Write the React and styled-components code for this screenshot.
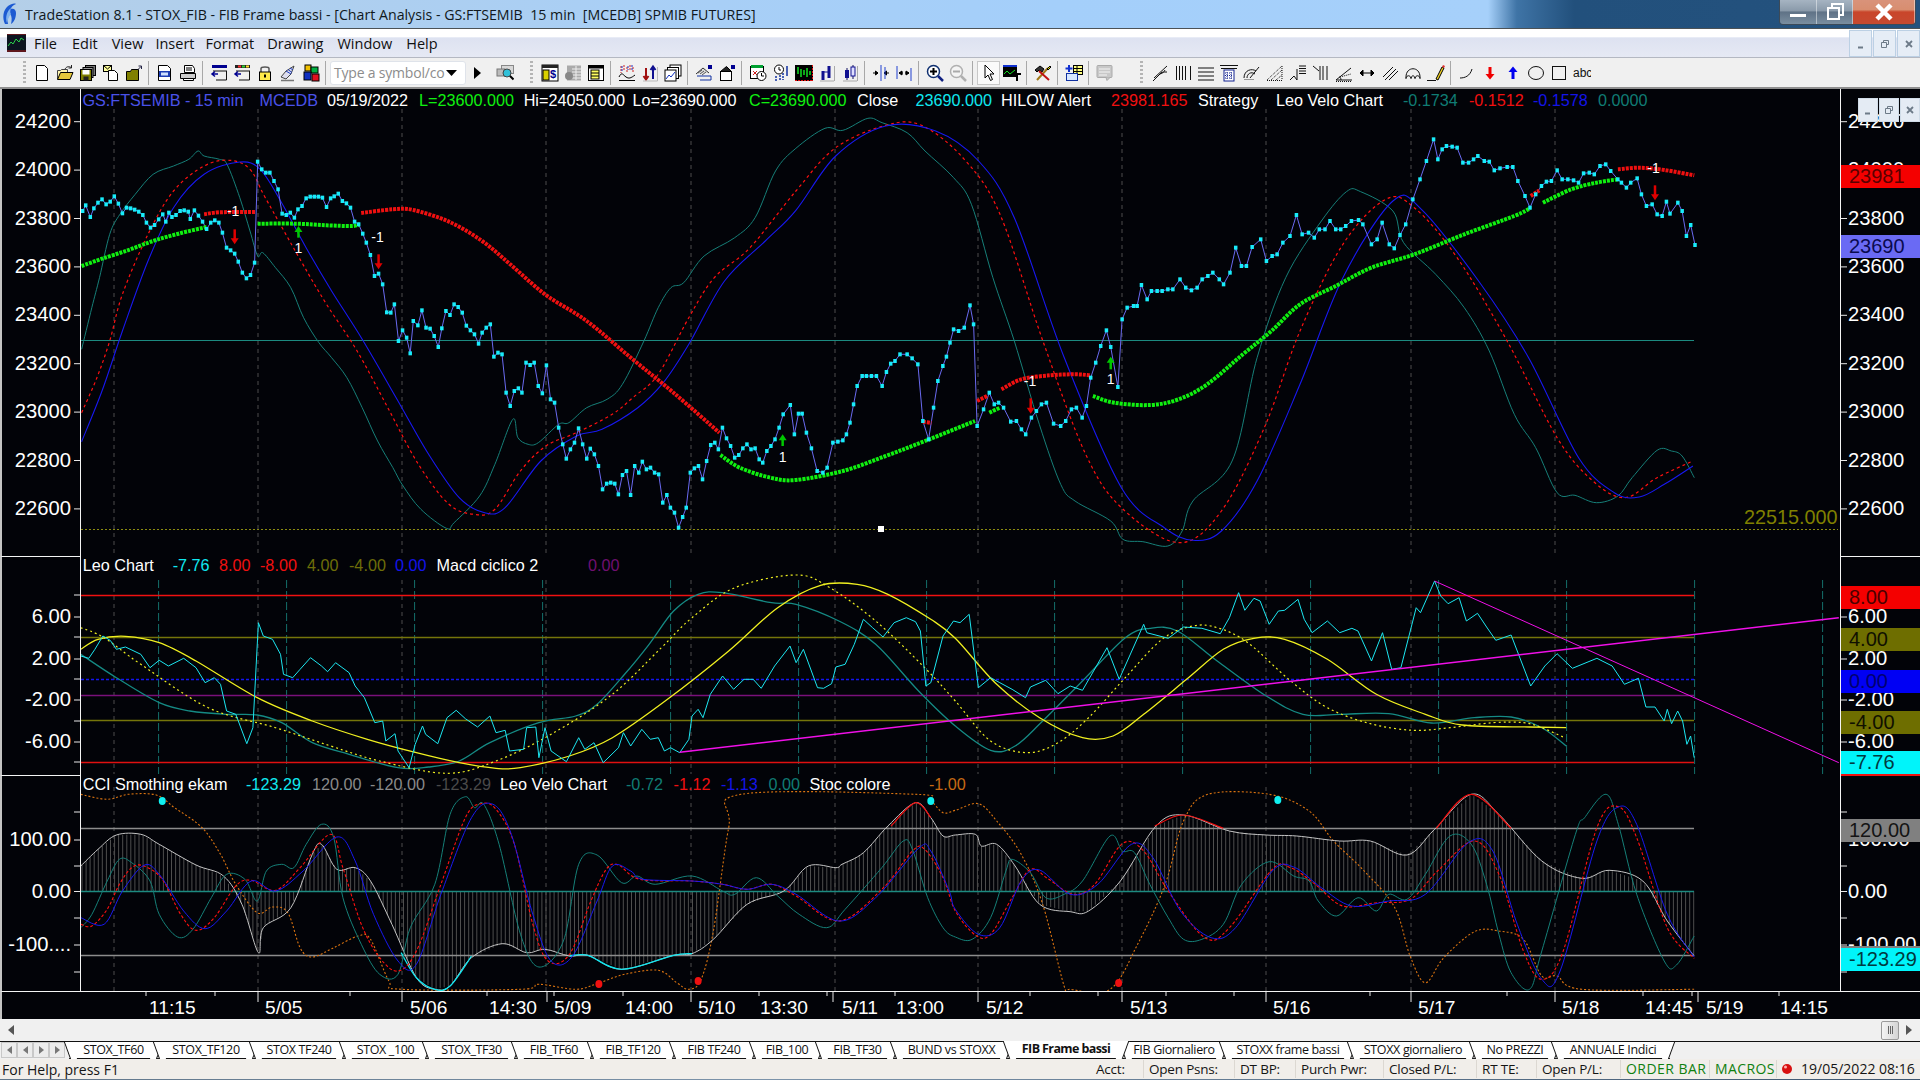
import React from 'react';
import styled, { createGlobalStyle } from 'styled-components';

const GlobalStyle = createGlobalStyle`
  html, body {
    margin: 0;
    padding: 0;
    width: 1920px;
    height: 1080px;
    overflow: hidden;
    background: #f0f0f0;
  }
  * { box-sizing: border-box; }
`;

const UI_FONT = '"Open Sans", "Liberation Sans", sans-serif';
const CHART_FONT = '"Liberation Sans", Arial, sans-serif';

/* ---------- traced chart data, written in crop coordinates ---------- */

const parse = (str, sx, ox, oy) =>
  str.trim().split(/\s+/).map((s) => {
    const [x, y] = s.split(',').map(Number);
    return [ox + x / sx, oy + y / 3];
  });
const A = (s) => parse(s, 1.96, 0, 90);
const B = (s) => parse(s, 1.4, 800, 90);
const C = (s) => parse(s, 1.633, 0, 550);
const D = (s) => parse(s, 1.633, 960, 550);

const mono = (pts) => pts.filter((p, i) => i === 0 || p[0] > pts[i - 1][0] + 0.5);
const poly = (pts) => pts.map((p) => `${p[0].toFixed(1)},${p[1].toFixed(1)}`).join(' ');
const smooth = (pts) =>
  pts.reduce((d, p, i) => {
    if (i === 0) return `M${p[0].toFixed(1)} ${p[1].toFixed(1)}`;
    const p0 = pts[i - 2] || pts[i - 1];
    const p1 = pts[i - 1];
    const p3 = pts[i + 1] || p;
    const c1 = [p1[0] + (p[0] - p0[0]) / 6, p1[1] + (p[1] - p0[1]) / 6];
    const c2 = [p[0] - (p3[0] - p1[0]) / 6, p[1] - (p3[1] - p1[1]) / 6];
    return `${d}C${c1[0].toFixed(1)} ${c1[1].toFixed(1)} ${c2[0].toFixed(1)} ${c2[1].toFixed(1)} ${p[0].toFixed(1)} ${p[1].toFixed(1)}`;
  }, '');

const yAt = (pts, x) => {
  for (let i = 1; i < pts.length; i++) {
    if (x <= pts[i][0]) {
      const t = (x - pts[i - 1][0]) / (pts[i][0] - pts[i - 1][0]);
      return pts[i - 1][1] + t * (pts[i][1] - pts[i - 1][1]);
    }
  }
  return pts[pts.length - 1][1];
};

const price = [
  ...A(`162,360 168,343 177,378 184,352 192,335 200,325 208,340 216,332 224,316 232,338 240,367 248,350 256,352 264,356 272,362 280,372 287,395 295,410 303,402 311,385 319,370 325,392 331,365 337,378 345,372 353,360 361,358 369,362 373,384 381,358 389,374 397,392 405,414 413,395 421,388 429,395 436,425 444,470 452,478 460,488 467,512 475,545 483,562 491,552 499,515 505,212 513,235 521,245 529,245 537,270 545,295 553,368 561,372 569,365 577,380 584,355 592,345 600,322 608,317 616,317 624,317 632,320 640,348 648,322 655,316 663,308 671,330 679,337 687,350 695,392 703,400 711,428 718,455 726,492 734,555 742,548 750,580 758,664 766,665 773,640 781,750 789,718 797,740 804,787 810,690 819,703 827,658 835,710 843,713 851,735 859,768 866,712 874,660 882,672 890,640 898,648 906,665 914,704 922,718 930,730 938,758 945,725 953,710 961,700 968,797 976,785 984,790 992,905 1000,945 1008,900 1016,892 1023,905 1031,815 1039,822 1047,815 1055,885 1063,907 1071,823 1079,925 1087,935 1095,1010 1103,1060 1110,1103 1118,1075 1126,1055 1134,1012 1142,1060 1150,1103 1157,1073 1165,1090 1173,1125 1181,1195 1189,1178 1197,1175 1205,1178 1212,1210 1220,1152 1228,1140 1236,1212 1244,1125 1252,1145 1259,1112 1267,1135 1275,1130 1283,1145 1291,1150 1299,1235 1307,1212 1314,1250 1322,1265 1330,1310 1338,1278 1345,1250 1353,1145 1361,1132 1369,1125 1377,1165 1385,1110 1393,1062 1401,1055 1408,1075 1416,1010 1424,1042 1432,1065 1440,1100 1448,1092 1456,1072 1464,1060 1472,1075 1480,1072 1488,1105 1495,1115 1503,1080 1511,1065 1519,1045 1527,1010 1535,970 1549,942 1557,1030 1565,968`),
  ...B(`3,968 9,1025 16,1072 24,1140 32,1145 38,1130 46,1055 53,1052 60,1048 65,1030 70,995 75,940 80,885 87,855 93,855 100,855 107,855 115,885 121,843 127,818 133,810 140,790 150,790 157,802 165,820 172,990 180,1045 187,950 193,870 200,825 205,797 210,755 215,715 222,720 230,710 238,643 243,700 248,1005 257,955 265,905 272,940 278,935 285,950 295,992 303,990 310,1015 316,1030 324,980 331,960 338,940 345,935 355,998 365,1005 372,990 380,955 387,950 395,980 401,945 407,860 414,815 421,765 429,718 435,768 445,888 451,685 458,650 467,645 472,645 478,582 486,625 492,600 500,600 507,600 515,595 522,595 532,565 540,590 548,598 556,590 563,565 571,555 578,545 587,565 593,580 602,545 610,470 618,525 625,525 633,468 645,445 653,510 661,495 668,490 676,455 686,435 695,372 703,430 712,425 720,440 727,415 735,415 742,390 750,415 757,415 764,405 772,390 782,387 788,400 800,460 808,445 815,395 825,460 832,472 840,432 848,400 858,325 868,265 877,210 887,145 893,205 899,175 905,165 913,167 920,170 928,215 936,215 943,205 949,195 958,210 965,212 972,238 980,232 990,228 998,228 1005,270 1015,315 1022,350 1030,310 1038,285 1045,272 1052,270 1060,238 1067,265 1075,265 1083,268 1090,275 1097,247 1105,245 1112,250 1120,225 1128,220 1135,240 1145,265 1150,275 1157,290 1163,275 1172,262 1178,310 1185,345 1193,340 1200,370 1207,375 1213,332 1218,368 1229,335 1235,360 1241,435 1247,402 1253,462`),
];

const fastTeal = [
  ...A(`160,775 180,650 195,560 215,430 235,370 265,310 300,250 340,225 370,205 388,180 400,195 430,205 445,220 470,320 490,420 505,495 515,485 540,530 570,590 595,680 625,755 650,800 680,860 710,950 740,1050 770,1130 790,1185 825,1255 875,1312 890,1295 940,1215 970,1120 1005,985 1015,1040 1035,1060 1055,1055 1095,1000 1115,995 1150,950 1190,925 1220,880 1262,750 1290,650 1315,590 1340,575 1380,495 1440,440 1480,380 1520,240 1560,172`),
  ...B(`35,112 60,118 95,82 115,95 150,125 175,180 215,260 240,340 270,560 300,750 335,1000 365,1180 385,1230 435,1290 452,1345 480,1352 515,1365 535,1320 550,1230 605,1110 640,800 680,560 730,390 765,302 785,302 830,360 845,455 890,550 930,650 965,780 1000,970 1030,1070 1060,1205 1085,1213 1115,1235 1145,1215 1165,1160 1200,1078 1220,1080 1235,1095 1252,1160`),
];
const midRed = [
  ...A(`160,965 190,860 215,750 240,610 290,430 340,300 400,225 450,208 490,235 520,320 590,510 640,640 700,780 760,950 820,1120 880,1240 930,1270 970,1255 1020,1140 1070,1065 1130,1025 1200,970 1240,920 1290,850 1350,680 1400,560 1470,470 1560,300`),
  ...B(`50,170 120,103 170,103 230,205 280,370 340,750 400,1090 450,1250 530,1355 590,1260 650,1010 700,720 760,460 820,325 860,350 920,500 990,750 1060,1040 1110,1170 1155,1220 1200,1160 1250,1110`),
];
const slowBlue = [
  ...A(`160,1052 200,900 240,720 290,510 340,350 400,250 470,213 510,235 550,330 600,470 650,600 710,745 780,930 840,1090 900,1220 950,1265 990,1250 1060,1110 1130,1035 1180,1015 1250,950 1300,875 1350,760 1420,570 1500,450 1560,358`),
  ...B(`50,195 120,105 190,120 250,210 300,380 370,800 450,1190 510,1310 550,1348 590,1320 640,1170 700,880 760,560 830,330 870,355 950,570 1020,800 1090,1100 1140,1205 1175,1218 1210,1180 1250,1125`),
];
const greenRuns = [
  A('160,525 200,503 250,478 300,450 350,428 405,408'),
  A('505,398 580,398 640,403 690,405 705,400'),
  [...A('1412,1092 1450,1130 1510,1160 1560,1167'), ...B('60,1140 120,1095 175,1050 245,990')],
  B('265,965 280,950'),
  B('410,915 440,935 490,942 530,925 570,880 620,790 660,720 700,640 750,585 800,530 860,490 930,430 1000,375 1022,352'),
  B('1040,335 1080,295 1115,275 1145,265'),
];
const redRuns = [
  A('400,370 430,364 500,363'),
  A('708,366 770,355 810,357 880,392 945,450 1000,520 1070,612 1150,690 1240,805 1320,905 1410,1025'),
  B('172,992 184,996'),
  B('248,930 262,915'),
  B('282,895 310,865 350,853 385,850 407,853'),
  B('1023,315 1035,298'),
  B('1145,235 1175,230 1210,237 1252,253'),
];
const arrows = [
  { at: A('460,415 460,460'), color: '#e00000' },
  { at: A('585,440 585,405'), color: '#00c800' },
  { at: A('742,490 742,535'), color: '#e00000' },
  { at: A('1534,1065 1534,1030'), color: '#00c800' },
  { at: B('323,922 323,968'), color: '#e00000' },
  { at: B('435,835 435,797'), color: '#00c800' },
  { at: B('1197,283 1197,328'), color: '#e00000' },
];
const signalLabels = [
  [A('457,375')[0], '-1'],
  [A('740,453')[0], '-1'],
  [A('585,487')[0], '1'],
  [A('1534,1112')[0], '1'],
  [B('322,885')[0], '-1'],
  [B('1195,245')[0], '-1'],
  [B('435,880')[0], '1'],
];

const macdCyan = [
  ...C(`132,315 145,322 155,295 168,255 180,268 190,295 205,288 230,310 245,350 260,328 275,345 300,322 320,350 335,395 350,380 360,400 370,480 385,490 403,578 413,530 422,215 430,255 445,265 458,310 463,370 478,380 490,355 507,320 525,345 535,362 548,335 570,365 580,405 595,440 612,515 625,510 630,570 645,548 650,600 668,650 678,580 690,525 695,550 715,578 730,500 745,478 760,503 780,528 800,495 810,545 825,538 832,600 855,595 860,530 875,528 880,620 890,530 900,600 925,632 945,560 955,595 970,575 985,635 1010,590 1018,545 1030,585 1048,535 1062,565 1075,560 1085,600 1095,590 1110,605 1125,565 1130,495 1140,475 1148,500 1160,430 1180,375 1198,415 1215,385 1230,385 1243,412 1265,345 1290,285 1300,335 1312,295 1335,410 1345,412 1358,398 1365,348 1380,340 1395,280 1410,205 1425,230 1442,258 1460,215 1480,200 1495,212 1503,240 1512,405 1520,395 1540,255 1557,210`),
  ...D(`0,215 15,190 30,410 50,380 65,395 85,415 107,440 115,408 140,388 160,428 180,405 200,418 240,290 260,385 300,220 305,245 340,262 365,228 395,232 425,248 440,200 455,125 465,178 480,142 490,150 505,220 520,180 530,178 552,145 562,205 575,245 600,210 620,245 640,232 650,240 672,330 690,245 705,355 720,350 745,170 752,185 775,90 785,135 797,158 815,140 827,210 845,187 860,228 875,268 900,252 932,405 955,345 975,308 1000,352 1040,322 1065,345 1085,400 1108,382 1120,468 1135,468 1150,510 1155,475 1162,518 1172,480 1180,510 1187,580 1193,555 1199,620`),
];
const macdTeal = [
  ...C('132,310 190,380 260,455 310,480 370,490 420,492 460,515 510,575 570,610 650,650 700,648 750,630 800,575 880,515 940,495 975,460 1020,370 1060,280 1100,180 1140,130 1180,125 1260,155 1300,160 1370,210 1430,280 1500,420 1560,525'),
  ...D('50,598 90,585 135,510 200,390 270,260 310,232 355,240 420,330 500,435 560,490 620,490 700,488 770,516 840,500 900,498 950,530 990,585'),
];
const macdYellow = [
  ...C('132,295 160,265 205,256 260,275 320,330 420,440 510,510 600,565 680,605 750,635 810,652 850,650 930,615 1000,560 1090,445 1190,300 1270,170 1340,103 1400,100 1450,130 1520,205 1560,262'),
  ...D('60,400 130,500 200,560 250,555 300,490 370,385 430,295 480,262 530,265 600,325 680,430 760,490 820,522 930,528 990,530'),
];
const macdDotted = [
  ...C('132,230 170,260 230,340 340,470 450,530 540,585 620,630 730,667 810,630 900,550 1000,430 1080,290 1130,200 1200,110 1300,72 1355,110 1430,210 1510,350 1560,450'),
  ...D('50,570 110,605 160,575 210,500 270,380 330,265 380,225 420,230 470,275 540,390 600,470 670,518 740,538 800,530 870,515 920,515 950,530 985,558'),
];
const rising = [C('1110,604')[0], D('1435,200')[0]];
const falling = [D('775,90')[0], D('1435,635')[0]];

const cciLine = mono([
  ...C('132,945 160,895 190,852 230,850 260,880 320,942 365,975 395,1060 422,1205 430,1130 475,1070 510,910 525,880 550,955 580,950 605,990 640,1120 680,1280 710,1315 735,1305 770,1220 820,1178 860,1205 890,1195 930,1215 960,1213 1015,1255 1100,1213 1130,1208 1165,1165 1220,1060 1280,1020 1320,945 1365,950 1375,940 1410,905 1450,825 1495,755 1520,800 1540,855 1560,852'),
  ...D('25,850 35,885 60,880 90,945 130,1060 180,1082 210,1080 262,990 320,825 365,792 440,840 500,852 550,855 620,870 670,870 730,912 775,835 835,730 880,790 950,930 1015,982 1060,958 1115,990 1155,1110 1199,1215'),
]);
const cciCyan = [
  C('655,1205 680,1280 710,1315 735,1305 770,1215'),
  C('930,1215 960,1213 1015,1255 1100,1213 1130,1208'),
];
const cciRed = [
  C('1455,825 1495,755 1520,800'),
  D('318,825 365,792 430,832'),
  D('778,832 835,730 900,832'),
];
const stoc = [
  ...C('132,730 175,745 210,730 255,732 285,770 330,830 360,910 385,1000 420,1085 445,1068 470,1085 490,1190 510,1218 545,1190 585,1155 605,1165 635,1290 655,1315 850,1315 880,1300 940,1315 975,1298 1020,1270 1075,1258 1105,1295 1125,1315 1145,1285 1165,1140 1190,830 1210,730 1495,730 1520,750 1540,785 1560,778'),
  ...D('30,758 60,810 100,910 135,1060 170,1305 180,1315 245,1315 290,1180 335,1000 365,810 405,730 505,730 570,780 610,870 660,960 710,1070 735,1215 760,1295 790,1220 840,1142 880,1140 920,1165 950,1275 975,1275 1015,1315 1199,1315'),
];
const veloTeal = [
  ...C('132,1130 150,1090 175,990 195,925 215,935 245,990 260,1090 290,1158 315,1135 345,1040 370,970 400,985 420,1050 435,960 460,940 480,950 500,880 525,820 545,860 560,1040 590,1180 620,1270 650,1270 670,1130 710,1000 735,790 760,737 775,770 790,760 815,880 850,1150 880,1248 920,1170 945,940 975,912 1015,995 1040,975 1070,1000 1130,975 1180,1020 1200,1030 1235,980 1270,1035 1305,1090 1350,1130 1380,1075 1440,950 1475,870 1490,895 1515,1040 1540,1130 1560,1158'),
  ...D('20,1165 50,1100 75,960 85,925 115,965 140,1040 170,1030 200,990 245,855 265,900 285,905 310,1000 340,1100 365,1165 395,1165 430,1120 460,1000 505,932 545,975 570,990 585,1050 615,1095 650,1040 680,1080 700,1030 730,1045 760,970 800,855 835,880 860,1000 880,1150 900,1265 930,1315 950,1200 1005,850 1020,800 1055,730 1075,820 1105,1030 1150,1230 1170,1242 1199,1155'),
];
const veloRed = [
  ...C('132,1120 150,1125 175,1075 195,1000 215,950 235,945 265,985 295,1090 320,1138 350,1100 385,1005 410,988 450,1018 490,950 540,850 560,950 590,1120 620,1220 650,1260 680,1200 720,1000 760,800 785,758 810,775 840,880 870,1120 895,1230 930,1210 965,1050 990,955 1010,942 1045,985 1130,990 1180,1000 1220,1015 1260,1000 1300,1035 1370,1110 1440,1015 1490,900 1510,895 1540,980 1560,1080'),
  ...D('25,1152 50,1150 85,1040 115,955 145,985 185,1030 220,1000 265,878 300,900 340,1020 400,1160 440,1130 510,955 540,950 580,1000 625,1065 680,1055 735,1045 780,960 840,870 880,970 920,1200 950,1285 985,1200 1040,830 1075,767 1105,860 1155,1130 1199,1222'),
];
const veloBlue = [
  ...C('132,1100 170,1120 200,1020 235,943 260,970 300,1080 335,1133 370,1080 410,990 450,1020 495,960 550,858 580,930 610,1090 650,1230 680,1240 720,1030 770,800 805,760 835,850 870,1090 900,1230 935,1215 975,1050 1000,945 1030,960 1050,985 1130,990 1180,1000 1220,1015 1260,1000 1300,1030 1370,1110 1430,1040 1500,892 1520,900 1550,1020 1560,1075'),
  ...D('30,1150 65,1130 100,990 130,957 180,1030 225,1000 280,880 315,920 360,1080 410,1160 450,1130 510,960 545,948 590,1010 640,1065 700,1050 760,1030 830,875 870,900 910,1120 950,1285 980,1260 1040,870 1075,768 1105,820 1155,1090 1199,1218'),
];

const GRID_X = [114, 258, 402, 546, 691, 835, 978, 1122, 1266, 1411, 1555];
const MACD_X = Array.from({ length: 14 }, (_, i) => 158.6 + i * 128);
const HIST_X = Array.from({ length: 397 }, (_, i) => 82 + i * 4.07);

/* ---------- window chrome ---------- */

const Page = styled.div`
  width: 1920px;
  height: 1080px;
  display: flex;
  flex-direction: column;
  overflow: hidden;
`;

const TitleBar = styled.div`
  height: 29px;
  flex: none;
  display: flex;
  align-items: center;
  padding-left: 2px;
  border-bottom: 1px solid #4c5256;
  background: linear-gradient(90deg, #b4cfe8 0, #a9cff5 33%, #a4cffa 55%, #a6d0fa 77.5%, #3f74a6 79%, #22507c 82%, #24527e 100%);
`;

const TitleText = styled.span`
  margin-left: 7px;
  font: 14.2px ${UI_FONT};
  color: #101820;
  white-space: pre;
`;

const CaptionButtons = styled.div`
  margin-left: auto;
  margin-right: 4px;
  align-self: flex-start;
  display: flex;
  height: 25px;
  border: 1px solid #3c4a58;
  border-top: none;
  border-radius: 0 0 4px 4px;
  overflow: hidden;
`;

const CaptionButton = styled.div`
  width: ${(p) => p.$w}px;
  display: flex;
  align-items: center;
  justify-content: center;
  border-right: 1px solid rgba(255, 255, 255, 0.45);
  background: ${(p) =>
    p.$close
      ? 'linear-gradient(180deg, #d9937a 0, #d88e70 40%, #c9452a 50%, #c64a30 100%)'
      : 'linear-gradient(180deg, #a6b4c2 0, #8a9aaa 45%, #5f7286 50%, #7a8ea0 100%)'};
`;

const MenuBar = styled.div`
  height: 29px;
  flex: none;
  display: flex;
  align-items: center;
  padding-left: 7px;
  border-bottom: 1px solid #b4b8c2;
  background: linear-gradient(180deg, #fff 0, #fff 27%, #dde2f1 32%, #e6e9f4 100%);
`;

const MenuItem = styled.span`
  font: 14.5px ${UI_FONT};
  color: #101010;
  margin-left: ${(p) => p.$gap}px;
`;

const MdiButtons = styled.div`
  margin-left: auto;
  display: flex;
  align-self: flex-end;
`;

const MdiButton = styled.div`
  width: 23px;
  height: 27px;
  margin-left: 1px;
  display: flex;
  align-items: center;
  justify-content: center;
  background: #e6edf6;
  border: 1px solid #bcd0e4;
  color: #6d7a88;
`;

const ToolBar = styled.div`
  height: 31px;
  flex: none;
  display: flex;
  align-items: center;
  padding-left: 23px;
  background: #f0f0f0;
  border-bottom: 2px solid #8f8f8f;
`;

const Grip = styled.div`
  width: 3px;
  height: 24px;
  margin: ${(p) => p.$m || '0 4px 0 0'};
  background: repeating-linear-gradient(180deg, #b4b4b4 0 2px, transparent 2px 4px);
`;

const Cell = styled.div`
  width: 23px;
  height: 24px;
  flex: none;
  display: flex;
  align-items: center;
  justify-content: center;
  margin-left: ${(p) => p.$ml || 0}px;
  ${(p) => p.$pressed && 'background: #fafafa; outline: 1px solid #c8c8c8; outline-offset: -1px;'}
`;

const Sep = styled.div`
  width: 1px;
  height: 24px;
  flex: none;
  margin: 0 4px 0 3px;
  background: #a8a8a8;
`;

const SymbolBox = styled.div`
  width: 136px;
  height: 24px;
  flex: none;
  display: flex;
  align-items: center;
  justify-content: space-between;
  padding: 0 8px 0 3px;
  background: #fff;
  border: 1px solid #dfe3ea;
  border-radius: 3px;
  font: 14px ${UI_FONT};
  letter-spacing: -0.2px;
  color: #8c8c8c;
  white-space: nowrap;
`;

/* ---------- chart panes ---------- */

const ChartWindow = styled.div`
  height: 930px;
  flex: none;
  display: flex;
  flex-direction: column;
  background: #020308;
`;

const PaneRow = styled.div`
  height: ${(p) => p.$h}px;
  flex: none;
  display: grid;
  grid-template-columns: 81px 1759px 80px;
`;

const LeftColumn = styled.div`
  border-left: 2px solid #c4c4c4;
  border-right: 1px solid #f4f4f4;
  border-bottom: ${(p) => (p.$last ? 'none' : '1px solid #f4f4f4')};
`;

const RightColumn = styled.div`
  position: relative;
  border-left: 1px solid #f4f4f4;
  border-bottom: ${(p) => (p.$last ? 'none' : '1px solid #f4f4f4')};
`;

const Plot = styled.div`
  position: relative;
  overflow: hidden;
`;

const Svg = styled.svg`
  display: block;
`;

const Legend = styled.div`
  position: absolute;
  top: ${(p) => p.$top}px;
  left: 0;
  display: flex;
  font: 16.2px/20px ${CHART_FONT};
  white-space: pre;
`;

const LegendItem = styled.span`
  flex: none;
  color: ${(p) => p.$color};
`;

const PriceTag = styled.div`
  position: absolute;
  left: 0;
  right: 0;
  top: ${(p) => p.$top}px;
  height: 23px;
  padding-left: 8px;
  font: 20px/23px ${CHART_FONT};
  background: ${(p) => p.$bg};
  color: ${(p) => p.$fg};
  box-shadow: ${(p) => p.$edge || 'none'};
`;

const ChartControls = styled.div`
  position: absolute;
  top: 9px;
  right: 0;
  display: flex;
`;

const ChartControl = styled.div`
  width: 20px;
  height: 24px;
  margin-left: 1px;
  display: flex;
  align-items: center;
  justify-content: center;
  background: #e4ebf4;
  border: 1px solid #d0dce8;
  color: #6d7a88;
`;

const TimeRow = styled.div`
  height: 28px;
  flex: none;
  border-top: 1px solid #f4f4f4;
  border-left: 2px solid #c4c4c4;
`;

const ScrollBar = styled.div`
  height: 22px;
  flex: none;
  display: flex;
  align-items: center;
  padding: 0 8px;
  background: #f0f0f0;
`;

const ScrollThumb = styled.div`
  margin-left: auto;
  width: 18px;
  height: 19px;
  margin-right: 7px;
  display: flex;
  align-items: center;
  justify-content: center;
  gap: 1px;
  background: linear-gradient(90deg, #f4f4f4, #d4d4d4);
  border: 1px solid #9a9a9a;
  border-radius: 2px;
`;

const ThumbLine = styled.span`
  width: 1px;
  height: 8px;
  background: #666;
`;

const TabStrip = styled.div`
  height: 18px;
  flex: none;
  display: flex;
  background: #f0f0f0;
  border-top: 1px solid #111;
`;

const TabNav = styled.div`
  width: 69px;
  flex: none;
  display: flex;
  padding-left: 1px;
`;

const TabNavButton = styled.div`
  width: 16px;
  height: 16px;
  display: flex;
  align-items: center;
  justify-content: center;
  border: 1px solid #c8c8c8;
  background: #ececec;
`;

const Tab = styled.div`
  position: relative;
  width: ${(p) => p.$w}px;
  height: 17px;
  flex: none;
  z-index: ${(p) => (p.$active ? 2 : 1)};
  display: flex;
  align-items: center;
  justify-content: center;
  padding-bottom: 1px;
  font: ${(p) => (p.$active ? 700 : 400)} 12.5px/16px ${UI_FONT};
  letter-spacing: ${(p) => (p.$active ? -0.6 : -0.35)}px;
  color: #111;
  white-space: nowrap;
  background: #fff;
  border-bottom: 1px solid #111;
  ${(p) => p.$active && 'margin-top: -1px; height: 18px;'}

  &::before,
  &::after {
    content: '';
    position: absolute;
    top: 0;
    bottom: -1px;
    width: 6px;
    background: #fff;
  }
  &::before {
    left: -2px;
    border-left: 1px solid #111;
    transform: skewX(20deg);
  }
  &::after {
    right: -2px;
    border-right: 1px solid #111;
    transform: skewX(-20deg);
  }
`;

const TabLabel = styled.span`
  position: relative;
  z-index: 1;
`;

const StatusBar = styled.div`
  height: 20px;
  flex: none;
  display: flex;
  align-items: center;
  background: #f1eeea;
  font: 13.5px ${UI_FONT};
  letter-spacing: -0.2px;
  color: #151515;
  white-space: nowrap;
`;

const StatusHelp = styled.span`
  padding-left: 2px;
  width: 1096px;
  flex: none;
  font-size: 14px;
  letter-spacing: 0;
`;

const StatusCell = styled.span`
  flex: none;
  width: ${(p) => p.$w}px;
  height: 18px;
  line-height: 18px;
  padding-left: ${(p) => p.$pad ?? 5}px;
  border-right: ${(p) => (p.$line ? '1px solid #dcd8d2' : 'none')};
  color: ${(p) => p.$color || '#151515'};
  ${(p) => p.$big && `font-size: 14px; letter-spacing: ${p.$big}px;`}
`;

const BallCell = styled.span`
  flex: none;
  width: 19px;
  display: flex;
  justify-content: center;
`;

const TaskStrip = styled.div`
  flex: 1;
  background: linear-gradient(90deg, #5f7488, #7c93aa 40%, #3e5670);
`;

/* ---------- toolbar icons ---------- */

const Ico = ({ children }) => (
  <svg width="18" height="18" viewBox="0 0 18 18" fill="none">{children}</svg>
);
const ink = { stroke: '#000', strokeWidth: 1 };

const ICONS = {
  newDoc: <path d="M3.5 1.5h8l3 3v12h-11z" fill="#fff" {...ink} />,
  open: (<>
    <path d="M1.5 15V6.500h3l1-1h6v3" fill="#fff6b0" stroke="#444" />
    <path d="M1.500 15.500l3-7h12.500l-3 7z" fill="#e6c93c" {...ink} />
    <path d="M9 5c1.500-2.500 4-3 6-1.500M15.500 1v3h-3" stroke="#222" />
  </>),
  saveAll: (<>
    <rect x="6.500" y="1.500" width="10" height="10" fill="#777" {...ink} />
    <rect x="4" y="3.500" width="10" height="10" fill="#999" {...ink} />
    <rect x="1.500" y="5.500" width="11" height="11" fill="#808000" {...ink} />
    <rect x="3.500" y="6" width="7" height="4.500" fill="#fff" />
    <rect x="4.500" y="12.500" width="5" height="4" fill="#222" />
  </>),
  docMail: (<>
    <rect x="1.500" y="1.500" width="8" height="6" fill="#ffff9c" {...ink} />
    <path d="M1.500 1.500l4 3.500 4-3.500" stroke="#000" />
    <path d="M6.500 6.500h6l3 3v7h-9z" fill="#fff" {...ink} />
  </>),
  folderUp: (<>
    <path d="M1.500 7.500h4l1-2h7v11h-12z" fill="#808000" {...ink} />
    <path d="M13 5.500l3-3M13.500 2h3v3" stroke="#224" />
  </>),
  page: (<>
    <path d="M2.500 1.500h9l3 3v12h-12z" fill="#fff" {...ink} />
    <rect x="3" y="7" width="11" height="6" fill="#1c3cb4" />
    <rect x="5" y="8.500" width="7" height="3" fill="#cfe0ff" />
  </>),
  printer: (<>
    <path d="M5.500 1.500h8l2 3v4h-10z" fill="#fff" {...ink} />
    <path d="M7 4h6M7 6h6" stroke="#000" />
    <path d="M1.500 9.500h15v5h-15z" fill="#ccc" {...ink} />
    <path d="M4.500 14.500h10v2h-10z" fill="#fff" {...ink} />
  </>),
  winBack: (<>
    <rect x="2" y="1" width="15" height="3" fill="#000090" />
    <path d="M3 7h14M16.500 7v9H6" stroke="#111" />
    <path d="M8 10H2M5 7.500L2 10l3 2.500" stroke="#000090" strokeWidth="1.500" />
  </>),
  winLights: (<>
    <rect x="2" y="1" width="15" height="3" fill="#222" />
    <rect x="5" y="1.500" width="3" height="2" fill="#ff3030" />
    <rect x="9" y="1.500" width="3" height="2" fill="#30d030" />
    <rect x="13" y="1.500" width="3" height="2" fill="#ffe030" />
    <path d="M3 7h14M16.500 7v9H6" stroke="#111" />
    <path d="M8 10H2M5 7.500L2 10l3 2.500" stroke="#000090" strokeWidth="1.500" />
  </>),
  lock: (<>
    <path d="M5 8V4.500C5 2.500 13 2.500 13 4.500V8" stroke="#555" strokeWidth="1.500" />
    <rect x="3.500" y="8" width="11" height="8.500" fill="#ffe94a" {...ink} />
    <rect x="8" y="10.500" width="2" height="3" fill="#000" />
  </>),
  dish: (<>
    <path d="M2 13l5-6 8-5-3 8-5 5z" fill="#dde" stroke="#444" />
    <path d="M7 7l5 3M9 5.500l4 3M11 4l3 2" stroke="#2040c0" />
    <path d="M2 16.500h13" stroke="#777" strokeWidth="1.500" />
  </>),
  cubes: (<>
    <rect x="3" y="1" width="6" height="6" fill="#f0c000" {...ink} />
    <rect x="9" y="3" width="7" height="6" fill="#00b040" {...ink} />
    <rect x="2" y="8" width="7" height="8" fill="#1030c0" {...ink} />
    <rect x="10" y="10" width="7" height="7" fill="#e01020" {...ink} />
  </>),
  zoomDoc: (<>
    <rect x="5.500" y="1.500" width="12" height="8" fill="#d8d8d8" stroke="#888" />
    <rect x="1" y="5" width="8" height="7" fill="#bbb" stroke="#777" />
    <circle cx="11" cy="9" r="4" fill="#30c0d8" stroke="#444" />
    <path d="M14 12l3.500 3.500" stroke="#000" strokeWidth="2" />
  </>),
  dollar: (<>
    <rect x="1" y="1" width="16" height="16" fill="#fff" {...ink} />
    <rect x="1" y="1" width="16" height="3" fill="#222" />
    <rect x="2" y="6" width="6" height="10" fill="#d8d000" stroke="#000" />
    <text x="9" y="14" fontSize="11" fontFamily={CHART_FONT} fontWeight="700" fill="#000090">$</text>
  </>),
  gridGray: (<>
    <rect x="3" y="1.500" width="14" height="15" fill="#aaa" />
    <path d="M8 5h9M8 8h9M8 11h9M8 14h9M12 2v14" stroke="#eee" />
    <circle cx="5" cy="12" r="4" fill="#888" />
  </>),
  yellowSheet: (<>
    <rect x="1.500" y="1.500" width="15" height="15" fill="#fff" {...ink} />
    <rect x="1.500" y="1.500" width="15" height="3" fill="#000" />
    <rect x="4" y="6" width="8" height="9" fill="#ffff60" stroke="#000" />
    <path d="M4 9h8M4 12h8" stroke="#000" />
  </>),
  waveBars: (<>
    <path d="M3 2v7M6 1v6M9 3v6M12 1v6M15 3v6" stroke="#d02020" strokeDasharray="2 1" />
    <path d="M4 2v5M10 2v4M14 1v5" stroke="#2030c0" strokeDasharray="2 1" />
    <path d="M1 13c3-6 4-2 7 0s5 1 9-2" stroke="#000" />
    <path d="M1 16.500h16" stroke="#000" />
  </>),
  updown: (<>
    <path d="M5 4v11M2.500 12L5 15.500 7.500 12" stroke="#a01010" strokeWidth="2" />
    <path d="M12 15V3M9.500 6L12 2.500 14.500 6" stroke="#101090" strokeWidth="2" />
    <path d="M16.500 3v14H2" stroke="#bbb" />
  </>),
  stack: (<>
    <rect x="6" y="1" width="11" height="11" fill="#fff" {...ink} />
    <rect x="3.500" y="3.500" width="11" height="11" fill="#fff" {...ink} />
    <rect x="1" y="6" width="11" height="11" fill="#fff" {...ink} />
    <path d="M2 15l3-4 2 2 4-5" stroke="#1030c0" />
  </>),
  hatchWin: (<>
    <path d="M1 10l7-6 6 5" fill="#ddd" stroke="#333" />
    <path d="M3 9l4-3M5 10l4-3M7 11l4-3" stroke="#555" />
    <path d="M13 1h4v4h-4z" fill="#000090" />
    <path d="M2 12h14v4H5" stroke="#1030a0" />
  </>),
  blackWin: (<>
    <rect x="2.500" y="7.500" width="11" height="9" fill="#fff" {...ink} />
    <path d="M2.500 7.500l6-5 5 5z" fill="#222" stroke="#000" />
    <path d="M13 1h4v4h-4z" fill="#000090" />
  </>),
  calendarClock: (<>
    <rect x="1.500" y="2.500" width="13" height="12" fill="#fff" {...ink} />
    <rect x="2" y="1" width="12" height="3" fill="#00a030" />
    <path d="M4 7l4 4M8 7l-4 4" stroke="#d02020" />
    <circle cx="12.500" cy="12" r="4.500" fill="#fff" {...ink} />
    <path d="M12.500 9v3h2.500" stroke="#000" />
  </>),
  clockBars: (<>
    <circle cx="7" cy="5.500" r="4.500" fill="#fff" {...ink} />
    <path d="M7 3v3h2" stroke="#000" />
    <path d="M4 12v5M8 11v6M11 9v7" stroke="#1030a0" strokeWidth="1.500" strokeDasharray="2 1" />
    <path d="M15 2v10" stroke="#1030a0" strokeWidth="1.500" />
  </>),
  blackChart: (<>
    <rect x="0" y="1" width="18" height="16" fill="#000" />
    <path d="M3 3v7M6 5v8M9 6v5M12 4v9M15 7v4" stroke="#10e020" strokeWidth="1.500" />
    <path d="M0 16.500h18M17.500 1v16" stroke="#e01010" strokeDasharray="2 1" />
  </>),
  bars: (<>
    <path d="M5 7v9" stroke="#101090" strokeWidth="3" />
    <path d="M11 2v12" stroke="#101090" strokeWidth="3" />
    <path d="M5 8h6" stroke="#101090" />
    <path d="M2 17h14M16.500 2v15" stroke="#aaa" />
  </>),
  candles: (<>
    <path d="M6 4v12M12 1v14" stroke="#101060" />
    <rect x="4" y="6" width="4" height="8" fill="#101090" />
    <rect x="10" y="3" width="4" height="9" fill="#e0e0ff" stroke="#101090" />
    <path d="M2 17h14M16.500 2v15" stroke="#aaa" />
  </>),
  squeeze: (<>
    <path d="M9 1v16" stroke="#2040d0" />
    <path d="M1 9h5M6 9L3.500 7v4zM17 9h-5M12 9l2.500-2v4z" fill="#000" stroke="#000" />
    <path d="M13 3v12" stroke="#2040d0" />
  </>),
  spread: (<>
    <path d="M2 2v13M16 4v13" stroke="#2040d0" />
    <path d="M4 9h4M4 9l3-2v4zM14 9h-4M14 9l-3-2v4z" fill="#000" stroke="#000" />
  </>),
  zoomIn: (<>
    <circle cx="7.500" cy="7.500" r="6" fill="#fff" stroke="#103070" strokeWidth="1.500" />
    <path d="M7.500 4v7M4 7.500h7" stroke="#000" strokeWidth="2" />
    <path d="M12 12l5 5" stroke="#102080" strokeWidth="2.500" />
  </>),
  zoomOut: (<>
    <circle cx="7.500" cy="7.500" r="6" fill="#f4f4f4" stroke="#b0b0b0" strokeWidth="1.500" />
    <path d="M4 7.500h7" stroke="#aaa" strokeWidth="2" />
    <path d="M12 12l5 5" stroke="#b0b0b0" strokeWidth="2.500" />
  </>),
  cursor: <path d="M5 1v13l3-3 2.500 5.500 2-1L10 10h4z" fill="#fff" {...ink} />,
  chartText: (<>
    <rect x="0" y="1" width="14" height="12" fill="#000" />
    <rect x="0" y="1" width="14" height="2" fill="#1030d0" />
    <path d="M1 10l3-3 3 3 5-4" stroke="#10e020" />
    <path d="M10 9h8v2h-3v6h-2v-6h-3z" fill="#000" />
  </>),
  tools: (<>
    <path d="M3 16L14 4" stroke="#a07818" strokeWidth="2" />
    <path d="M1 6l5-4 4 3-2 3-3-2-2 2z" fill="#333" stroke="#000" />
    <path d="M15 16L5 7" stroke="#c01010" strokeWidth="2" />
    <path d="M13 5l3-3 1 1-3 3z" fill="#e0e000" stroke="#000" />
  </>),
  plusGrid: (<>
    <path d="M4 1v7M0.500 4.500h7" stroke="#1030d0" strokeWidth="2" />
    <rect x="8.500" y="1.500" width="9" height="9" fill="#ffff80" {...ink} />
    <path d="M8.500 4.500h9M8.500 7.500h9M12 2v8" stroke="#000" />
    <rect x="1.500" y="9.500" width="11" height="7" fill="#d8e8ff" stroke="#1030a0" />
  </>),
  comment: (<>
    <rect x="1" y="1.500" width="15" height="12" rx="1" fill="#c8c8c8" stroke="#aaa" />
    <path d="M3 5h11M3 8h11M3 11h8" stroke="#f4f4f4" />
    <path d="M10 13.500l1 3 3-3" fill="#c8c8c8" stroke="#aaa" />
  </>),
  fork: <path d="M2 17L9 10M16 2L3 14M9 10c3-1 4-2 5-4M9 10c1-2 3-2 7-2" stroke="#111" />,
  vlines: <path d="M2.500 2v14M5.500 2v14M8.500 2v14M11.500 2v14M16.500 2v14" stroke="#111" />,
  hlines: <path d="M1 4h16M1 8h16M1 12h16M1 16h16" stroke="#111" />,
  fiboCalc: (<>
    <path d="M0 1.500h18M1 4.500h16" stroke="#111" />
    <rect x="4" y="6" width="10" height="11" fill="#fff" stroke="#102090" />
    <path d="M5 9h8M5 11.500h8M5 14h8M7 8v8M11 8v8" stroke="#102090" strokeDasharray="1 1" />
  </>),
  fan: (<>
    <path d="M1 14c0-8 8-10 12-7M4 14c0-4 4-7 8-4" stroke="#111" />
    <path d="M7 14L16 3" stroke="#111" />
    <path d="M1 15.500h10" stroke="#999" />
  </>),
  dottedFan: (<>
    <path d="M1 16.500h16M1 16L16 2M5 16L16 6M10 16l6-5" stroke="#111" strokeDasharray="1 1" />
    <path d="M16 2v14" stroke="#111" strokeDasharray="1 1" />
  </>),
  retrace: (<>
    <path d="M1 16l4-4 3 4V5" stroke="#111" />
    <path d="M10 2h7M10 4.500h7M10 7h7M10 9.500h7" stroke="#111" />
  </>),
  timeFan: <path d="M1 2l6 5M8 2v14M11 2v14M15 2v14" stroke="#111" />,
  angle: (<>
    <path d="M1 16L16 4M1 16h16M6 16c0-2-1-3-2-3" stroke="#111" />
    <path d="M5 13l11-3M1 17.500h16" stroke="#111" strokeDasharray="1 1" />
  </>),
  doubleArrow: <path d="M2 9h14M5 6L2 9l3 3zM13 6l3 3-3 3z" fill="#000" stroke="#000" />,
  parallels: <path d="M2 13L12 3M4 16L15 5M8 16l9-9" stroke="#111" />,
  arcs: (<>
    <path d="M2 13C2 2 16 2 16 13" stroke="#111" />
    <path d="M2 13v2M7 13v2M11 13v2M16 13v2M2 14c1-3 4-3 5 0c1-3 3-3 4 0c1-3 4-3 5 0" stroke="#111" />
  </>),
  pencil: (<>
    <path d="M0 16.500h9" stroke="#111" />
    <path d="M9 15l6-12 2 1-6 12z" fill="#f0d020" {...ink} />
    <path d="M15 3l1-2 2 1-1 2z" fill="#e03030" />
  </>),
  curve: <path d="M2 14c5 0 10-2 12-9" stroke="#111" />,
  redDown: (<>
    <path d="M9 3v8" stroke="#f00000" strokeWidth="3" />
    <path d="M4.500 10h9L9 15.500z" fill="#f00000" />
  </>),
  blueUp: (<>
    <path d="M9 15V7" stroke="#0000f0" strokeWidth="3" />
    <path d="M4.500 8h9L9 2.500z" fill="#0000f0" />
  </>),
  ellipse: <ellipse cx="9" cy="9" rx="7.500" ry="6.500" stroke="#111" />,
  square: <rect x="2.500" y="2.500" width="13" height="13" stroke="#111" />,
  abc: <text x="0" y="13" fontSize="12" fontFamily={CHART_FONT} fill="#111">abc</text>,
};

const TOOLBAR = [
  ['newDoc', 'open', 'saveAll', 'docMail', 'folderUp'],
  ['page', 'printer'],
  ['winBack', 'winLights', 'lock', 'dish', 'cubes'],
];
const TOOLBAR_2 = [
  ['dollar', 'gridGray', 'yellowSheet'],
  ['waveBars', 'updown', 'stack'],
  ['hatchWin', 'blackWin'],
  ['calendarClock', 'clockBars', 'blackChart', 'bars', 'candles'],
  ['squeeze', 'spread'],
  ['zoomIn', 'zoomOut'],
  ['cursor', 'chartText'],
  ['tools'],
  ['plusGrid'],
  ['comment'],
];
const TOOLBAR_3 = [
  ['fork', 'vlines', 'hlines', 'fiboCalc', 'fan', 'dottedFan', 'retrace', 'timeFan', 'angle', 'doubleArrow', 'parallels', 'arcs', 'pencil'],
  ['curve', 'redDown', 'blueUp', 'ellipse', 'square', 'abc'],
];

const ToolGroups = ({ groups }) =>
  groups.map((group, g) => (
    <React.Fragment key={g}>
      {g > 0 && <Sep />}
      {group.map((name) => (
        <Cell key={name} $pressed={name === 'cursor'}>
          <Ico>{ICONS[name]}</Ico>
        </Cell>
      ))}
    </React.Fragment>
  ));

/* ---------- chart parts ---------- */

const AxisSvg = ({ left, width, top, height, side, labels, minor = [] }) => (
  <Svg width={width} height={height} viewBox={`${left} ${top} ${width} ${height}`}>
    {[...labels.map((l) => l[0]), ...minor].map((y) => (
      <line
        key={y}
        x1={side === 'left' ? 74 : 1841}
        x2={side === 'left' ? 81 : 1847}
        y1={y}
        y2={y}
        stroke="#e8e8e8"
      />
    ))}
    {labels.map(([y, text]) => (
      <text
        key={text}
        x={side === 'left' ? 71 : 1848}
        y={y + 6}
        textAnchor={side === 'left' ? 'end' : 'start'}
        fontFamily={CHART_FONT}
        fontSize="20.200"
        fill="#fff"
      >
        {text}
      </text>
    ))}
  </Svg>
);

const Line = ({ pts, color, dash, w = 1 }) => (
  <path d={smooth(pts)} fill="none" stroke={color} strokeWidth={w} strokeDasharray={dash} />
);

const Dashes = ({ xs, y1, y2, color, dash = '4 4' }) =>
  xs.map((x) => (
    <line key={x} x1={x} x2={x} y1={y1} y2={y2} stroke={color} strokeDasharray={dash} />
  ));

const HLine = ({ y, x2 = 1694, color, dash, w = 1 }) => (
  <line x1="81" x2={x2} y1={y} y2={y} stroke={color} strokeWidth={w} strokeDasharray={dash} />
);

const ChartLegend = ({ top, items }) => (
  <Legend $top={top} style={{ paddingLeft: items[0][0] - 81 }}>
    {items.map(([x, text, color], i) => (
      <LegendItem
        key={x}
        $color={color}
        style={items[i + 1] ? { width: items[i + 1][0] - x } : undefined}
      >
        {text}
      </LegendItem>
    ))}
  </Legend>
);

const PriceArrow = ({ at, color }) => {
  const [[x, y1], [, y2]] = at;
  const dir = y2 > y1 ? 1 : -1;
  return (
    <>
      <line x1={x} x2={x} y1={y1} y2={y2 - dir * 4} stroke={color} strokeWidth="2.500" />
      <path d={`M${x - 4} ${y2 - dir * 6}h8L${x} ${y2}z`} fill={color} />
    </>
  );
};

const PricePane = () => (
  <Svg width="1759" height="468" viewBox="81 88 1759 468">
    <Dashes xs={GRID_X} y1={108} y2={556} color="#4c4c4c" />
    <HLine y={339.500} color="#1c8a80" />
    <HLine y={528.500} x2={1838} color="#8c8c10" dash="2 2" />
    <Line pts={fastTeal} color="#167f78" />
    <Line pts={midRed} color="#ff1010" w={1.200} dash="3 3" />
    <Line pts={slowBlue} color="#1818f0" w={1.100} />
    <polyline points={poly(price)} fill="none" stroke="#6a6af0" />
    {greenRuns.map((pts, i) => (
      <Line key={i} pts={pts} color="#10f010" w={4} dash="3 1" />
    ))}
    {redRuns.map((pts, i) => (
      <Line key={i} pts={pts} color="#f01010" w={4} dash="3 1" />
    ))}
    {price.map(([x, y], i) => (
      <rect key={i} x={x - 1.750} y={y - 2} width="3.500" height="4" fill="#18ecfa" />
    ))}
    {arrows.map((a, i) => (
      <PriceArrow key={i} {...a} />
    ))}
    {signalLabels.map(([[x, y], text], i) => (
      <text key={i} x={x} y={y} textAnchor="middle" fontFamily={CHART_FONT} fontSize="14" fill="#fff">
        {text}
      </text>
    ))}
    <text x="1744" y="523" fontFamily={CHART_FONT} fontSize="19.800" fill="#808000">22515.000</text>
    <rect x="878" y="525" width="6" height="6" fill="#fff" />
  </Svg>
);

const MacdPane = () => (
  <Svg width="1759" height="219" viewBox="81 556 1759 219">
    <Dashes xs={GRID_X} y1={579} y2={773} color="#4c4c4c" />
    <Dashes xs={MACD_X} y1={579} y2={773} color="#14706c" dash="8 3" />
    <HLine y={594.500} color="#f01010" w={1.500} />
    <HLine y={636.500} color="#75750a" w={1.500} />
    <HLine y={678.500} color="#1414f0" w={1.500} dash="3 2" />
    <HLine y={694.500} color="#7a107a" w={1.500} />
    <HLine y={719.500} color="#75750a" w={1.500} />
    <HLine y={761.500} color="#e01010" w={1.500} />
    <Line pts={macdTeal} color="#158a84" w={1.300} />
    <Line pts={macdDotted} color="#f0f020" w={1.200} dash="2 3" />
    <Line pts={macdYellow} color="#f0f020" w={1.300} />
    <polyline points={poly(macdCyan)} fill="none" stroke="#1ce6f0" />
    <polyline points={poly(rising)} fill="none" stroke="#f010e8" strokeWidth="1.400" />
    <polyline points={poly(falling)} fill="none" stroke="#f010e8" />
  </Svg>
);

const CciPane = () => (
  <Svg width="1759" height="215" viewBox="81 775 1759 215">
    <path
      d={HIST_X.map((x) => `M${x.toFixed(1)} 890.300V${yAt(cciLine, x).toFixed(1)}`).join('')}
      stroke="#4e4e4e"
      strokeWidth="1"
      fill="none"
    />
    <Dashes xs={GRID_X} y1={786} y2={990} color="#4c4c4c" />
    <HLine y={827.500} color="#8c8c8c" w={1.500} />
    <HLine y={954.500} color="#8c8c8c" w={1.500} />
    <HLine y={890.500} color="#1c8a80" w={1.500} />
    <Line pts={stoc} color="#dc7410" w={1.100} dash="2 2" />
    <Line pts={cciLine} color="#c4c4c4" />
    {cciCyan.map((pts, i) => (
      <Line key={i} pts={pts} color="#10e6f0" w={1.300} />
    ))}
    {cciRed.map((pts, i) => (
      <Line key={i} pts={pts} color="#f01010" w={1.200} />
    ))}
    <Line pts={veloTeal} color="#158078" />
    <Line pts={veloRed} color="#ff1010" w={1.100} dash="3 2" />
    <Line pts={veloBlue} color="#1818f0" />
    {[...C('265,750 1520,750'), ...D('519,747')].map(([x, y]) => (
      <ellipse key={x} cx={x} cy={y} rx="3.500" ry="4" fill="#10f0f0" />
    ))}
    {[...C('978,1299 1140,1290'), ...D('259,1296')].map(([x, y]) => (
      <ellipse key={x} cx={x} cy={y} rx="3.500" ry="4" fill="#f01010" />
    ))}
  </Svg>
);

const TICKS = [146, 215, 258, 350, 402, 487, 547, 554, 623, 691, 759, 827, 833, 895, 978, 1030, 1098, 1122, 1166, 1234, 1266, 1370, 1411, 1507, 1555, 1643, 1692, 1698, 1779];
const LONG_TICKS = [258, 402, 547, 691, 833, 978, 1122, 1266, 1411, 1555, 1698];
const TIME_LABELS = [
  [149, '11:15'], [265, '5/05'], [410, '5/06'], [489, '14:30'], [554, '5/09'], [625, '14:00'],
  [698, '5/10'], [760, '13:30'], [842, '5/11'], [896, '13:00'], [986, '5/12'], [1130, '5/13'],
  [1273, '5/16'], [1418, '5/17'], [1562, '5/18'], [1645, '14:45'], [1706, '5/19'], [1780, '14:15'],
];

const TimeAxis = () => (
  <Svg width="1918" height="27" viewBox="2 991 1918 27">
    {TICKS.map((x) => (
      <line key={x} x1={x} x2={x} y1="991" y2={LONG_TICKS.includes(x) ? 1001 : 995} stroke="#e8e8e8" />
    ))}
    {TIME_LABELS.map(([x, text]) => (
      <text key={x} x={x} y="1013" fontFamily={CHART_FONT} fontSize="19.200" fill="#fff">
        {text}
      </text>
    ))}
  </Svg>
);

const Glyph = ({ kind }) => (
  <svg width="10" height="10" viewBox="0 0 10 10" fill="none" stroke="currentColor">
    {kind === 'min' && <path d="M2 8.500h5" strokeWidth="2" />}
    {kind === 'restore' && <path d="M3.500 3.500v-2h5v4h-2M1.500 3.500h5v5h-5z" />}
    {kind === 'close' && <path d="M2 2l6 6M8 2L2 8" strokeWidth="1.800" />}
  </svg>
);

const LEGEND_1 = [
  [82.4, 'GS:FTSEMIB - 15 min', '#4a52e8'],
  [259.6, 'MCEDB', '#4a52e8'],
  [327, '05/19/2022', '#fff'],
  [419, 'L=23600.000', '#10f010'],
  [523.7, 'Hi=24050.000', '#fff'],
  [632.6, 'Lo=23690.000', '#fff'],
  [749, 'C=23690.000', '#10f010'],
  [857, 'Close', '#fff'],
  [915.5, '23690.000', '#10e8f0'],
  [1001, 'HILOW Alert', '#fff'],
  [1111, '23981.165', '#f01010'],
  [1198, 'Strategy', '#fff'],
  [1276, 'Leo Velo Chart', '#fff'],
  [1403, '-0.1734', '#107c74'],
  [1469, '-0.1512', '#f01010'],
  [1533, '-0.1578', '#1414e8'],
  [1598, '0.0000', '#107c74'],
];
const LEGEND_2 = [
  [82.7, 'Leo Chart', '#fff'],
  [172.7, '-7.76', '#10e8f0'],
  [219, '8.00', '#f01010'],
  [260, '-8.00', '#f01010'],
  [307, '4.00', '#6e6e08'],
  [349, '-4.00', '#6e6e08'],
  [395, '0.00', '#1414e8'],
  [436.6, 'Macd ciclico 2', '#fff'],
  [588, '0.00', '#701070'],
];
const LEGEND_3 = [
  [82.7, 'CCI Smothing ekam', '#fff'],
  [246, '-123.29', '#10e8f0'],
  [312, '120.00', '#8a8a8a'],
  [370, '-120.00', '#8a8a8a'],
  [436, '-123.29', '#4a4a4a'],
  [500, 'Leo Velo Chart', '#fff'],
  [626, '-0.72', '#107c74'],
  [673.6, '-1.12', '#f01010'],
  [721, '-1.13', '#1414e8'],
  [768.5, '0.00', '#107c74'],
  [809.5, 'Stoc colore', '#fff'],
  [929, '-1.00', '#c86a14'],
];

const PRICE_LABELS = [24200, 24000, 23800, 23600, 23400, 23200, 23000, 22800, 22600].map((v, i) => [
  120.7 + i * 48.4,
  String(v),
]);
const MACD_LABELS = [[616, '6.00'], [658, '2.00'], [699, '-2.00'], [741, '-6.00']];
const MACD_MINOR = [594, 636, 678, 720, 761];
const CCI_MINOR = [811, 865, 917, 971];

const TABS = [
  ['STOX_TF60', 89], ['STOX_TF120', 96], ['STOX TF240', 90], ['STOX _100', 83], ['STOX_TF30', 89],
  ['FIB_TF60', 76], ['FIB_TF120', 82], ['FIB TF240', 80], ['FIB_100', 66], ['FIB_TF30', 75],
  ['BUND vs STOXX', 113], ['FIB Frame bassi', 116, true], ['FIB Giornaliero', 100],
  ['STOXX frame bassi', 128], ['STOXX giornaliero', 122], ['No PREZZI', 82], ['ANNUALE Indici', 114],
];

const MENU = [['File', 8], ['Edit', 15], ['View', 14], ['Insert', 12], ['Format', 11], ['Drawing', 13], ['Window', 14], ['Help', 14]];

const App = () => (
  <Page>
    <GlobalStyle />
    <TitleBar>
      <svg width="16" height="24" viewBox="0 0 16 24">
        <path d="M3 22C0 16 1 8 6 4c3-2 6-3 8-2-3 1-5 3-5 5 3-1 5 1 5 4 0 5-2 9-5 11 1-4 1-8-1-10-2 2-3 6-2 10z" fill="#1c5ad2" />
        <path d="M5 21C3 15 5 9 9 6c-1 3-1 5 0 6-2 2-3 5-4 9z" fill="#7fb2ee" />
      </svg>
      <TitleText>{'TradeStation 8.1 - STOX_FIB - FIB Frame bassi - [Chart Analysis - GS:FTSEMIB  15 min  [MCEDB] SPMIB FUTURES]'}</TitleText>
      <CaptionButtons>
        <CaptionButton $w={37}>
          <svg width="20" height="14" viewBox="0 0 20 14"><rect x="2" y="9" width="16" height="3" fill="#fff" /></svg>
        </CaptionButton>
        <CaptionButton $w={36}>
          <svg width="20" height="18" viewBox="0 0 20 18" fill="none" stroke="#fff" strokeWidth="2"><path d="M7 4V1h11v11h-3" /><rect x="3" y="5" width="11" height="11" /></svg>
        </CaptionButton>
        <CaptionButton $w={62} $close>
          <svg width="20" height="18" viewBox="0 0 20 18" stroke="#fff" strokeWidth="4.500"><path d="M3 2l14 14M17 2L3 16" /></svg>
        </CaptionButton>
      </CaptionButtons>
    </TitleBar>

    <MenuBar>
      <svg width="19" height="18" viewBox="0 0 19 18">
        <rect width="19" height="18" fill="#0c1420" />
        <path d="M1 12l3-4 2 2 3-5 3 3 2-4 3 2" fill="none" stroke="#2bd14a" />
        <path d="M0 17h19M0 0h19" stroke="#b01a1a" />
      </svg>
      {MENU.map(([name, gap]) => (
        <MenuItem key={name} $gap={gap}>{name}</MenuItem>
      ))}
      <MdiButtons>
        <MdiButton><Glyph kind="min" /></MdiButton>
        <MdiButton><Glyph kind="restore" /></MdiButton>
        <MdiButton><Glyph kind="close" /></MdiButton>
      </MdiButtons>
    </MenuBar>

    <ToolBar>
      <Grip />
      <ToolGroups groups={TOOLBAR} />
      <Sep />
      <SymbolBox>
        Type a symbol/co
        <svg width="11" height="6" viewBox="0 0 11 6"><path d="M0 0h11L5.500 6z" fill="#000" /></svg>
      </SymbolBox>
      <Cell><svg width="7" height="12" viewBox="0 0 7 12"><path d="M0 0l7 6-7 6z" fill="#000" /></svg></Cell>
      <Cell $ml={4}><Ico>{ICONS.zoomDoc}</Ico></Cell>
      <Grip $m="0 5px 0 14px" />
      <ToolGroups groups={TOOLBAR_2} />
      <Grip $m="0 5px 0 24px" />
      <ToolGroups groups={TOOLBAR_3} />
    </ToolBar>

    <ChartWindow>
      <PaneRow $h={468}>
        <LeftColumn><AxisSvg left={2} width={78} top={88} height={467} side="left" labels={PRICE_LABELS} /></LeftColumn>
        <Plot>
          <PricePane />
          <ChartLegend top={1} items={LEGEND_1} />
        </Plot>
        <RightColumn>
          <AxisSvg left={1841} width={79} top={88} height={467} side="right" labels={PRICE_LABELS} />
          <PriceTag $top={76} $bg="#f40000" $fg="#5a0000">23981</PriceTag>
          <PriceTag $top={146} $bg="#6a6af4" $fg="#0a0a50">23690</PriceTag>
          <ChartControls>
            <ChartControl><Glyph kind="min" /></ChartControl>
            <ChartControl><Glyph kind="restore" /></ChartControl>
            <ChartControl><Glyph kind="close" /></ChartControl>
          </ChartControls>
        </RightColumn>
      </PaneRow>

      <PaneRow $h={219}>
        <LeftColumn><AxisSvg left={2} width={78} top={556} height={218} side="left" labels={MACD_LABELS} minor={MACD_MINOR} /></LeftColumn>
        <Plot>
          <MacdPane />
          <ChartLegend top={-2} items={LEGEND_2} />
        </Plot>
        <RightColumn>
          <AxisSvg left={1841} width={79} top={556} height={218} side="right" labels={MACD_LABELS} minor={MACD_MINOR} />
          <PriceTag $top={29} $bg="#f40000" $fg="#4a0000">8.00</PriceTag>
          <PriceTag $top={71} $bg="#6e6e00" $fg="#101000">4.00</PriceTag>
          <PriceTag $top={113} $bg="#0000f4" $fg="#000070">0.00</PriceTag>
          <PriceTag $top={154} $bg="#6e6e00" $fg="#101000">-4.00</PriceTag>
          <PriceTag $top={194} $bg="#00f4fa" $fg="#003a40" $edge="0 2px 0 #f01010">-7.76</PriceTag>
        </RightColumn>
      </PaneRow>

      <PaneRow $h={215}>
        <LeftColumn $last>
          <AxisSvg left={2} width={78} top={775} height={215} side="left" labels={[[839, '100.00'], [890.5, '0.00'], [944, '-100....']]} minor={CCI_MINOR} />
        </LeftColumn>
        <Plot>
          <CciPane />
          <ChartLegend top={-2} items={LEGEND_3} />
        </Plot>
        <RightColumn $last>
          <AxisSvg left={1841} width={79} top={775} height={215} side="right" labels={[[839, '100.00'], [890.5, '0.00'], [944, '-100.00']]} minor={CCI_MINOR} />
          <PriceTag $top={43} $bg="#808080" $fg="#141414">120.00</PriceTag>
          <PriceTag $top={172} $bg="#00f4fa" $fg="#003a40" $edge="0 -2px 0 #808080">-123.29</PriceTag>
        </RightColumn>
      </PaneRow>

      <TimeRow><TimeAxis /></TimeRow>
    </ChartWindow>

    <ScrollBar>
      <svg width="6" height="10" viewBox="0 0 6 10"><path d="M6 0L0 5l6 5z" fill="#555" /></svg>
      <ScrollThumb><ThumbLine /><ThumbLine /><ThumbLine /></ScrollThumb>
      <svg width="6" height="10" viewBox="0 0 6 10"><path d="M0 0l6 5-6 5z" fill="#555" /></svg>
    </ScrollBar>

    <TabStrip>
      <TabNav>
        {['M6 1v8L1 5z', 'M6 1v8L1 5z', 'M1 1v8l5-4z', 'M1 1v8l5-4z'].map((d, i) => (
          <TabNavButton key={i}>
            <svg width="7" height="10" viewBox="0 0 7 10"><path d={d} fill="#777" /></svg>
          </TabNavButton>
        ))}
      </TabNav>
      {TABS.map(([name, w, active]) => (
        <Tab key={name} $w={w} $active={active}><TabLabel>{name}</TabLabel></Tab>
      ))}
    </TabStrip>

    <StatusBar>
      <StatusHelp>For Help, press F1</StatusHelp>
      <StatusCell $w={48} $pad={0} $line>Acct:</StatusCell>
      <StatusCell $w={91} $line>Open Psns:</StatusCell>
      <StatusCell $w={61} $line>DT BP:</StatusCell>
      <StatusCell $w={88} $line>Purch Pwr:</StatusCell>
      <StatusCell $w={93} $line>Closed P/L:</StatusCell>
      <StatusCell $w={60} $line>RT TE:</StatusCell>
      <StatusCell $w={84} $line>Open P/L:</StatusCell>
      <StatusCell $w={89} $line $color="#108010" $big={0.45}>ORDER BAR</StatusCell>
      <StatusCell $w={67} $line $color="#108010" $big={0.4}>MACROS</StatusCell>
      <BallCell>
        <svg width="12" height="12" viewBox="0 0 12 12"><circle cx="6" cy="6" r="5" fill="#d81010" /><circle cx="4.500" cy="4" r="1.500" fill="#ffb0b0" /></svg>
      </BallCell>
      <StatusCell $w={124} $pad={5} $big={0.01}>19/05/2022 08:16</StatusCell>
    </StatusBar>
    <TaskStrip />
  </Page>
);

export default App;
